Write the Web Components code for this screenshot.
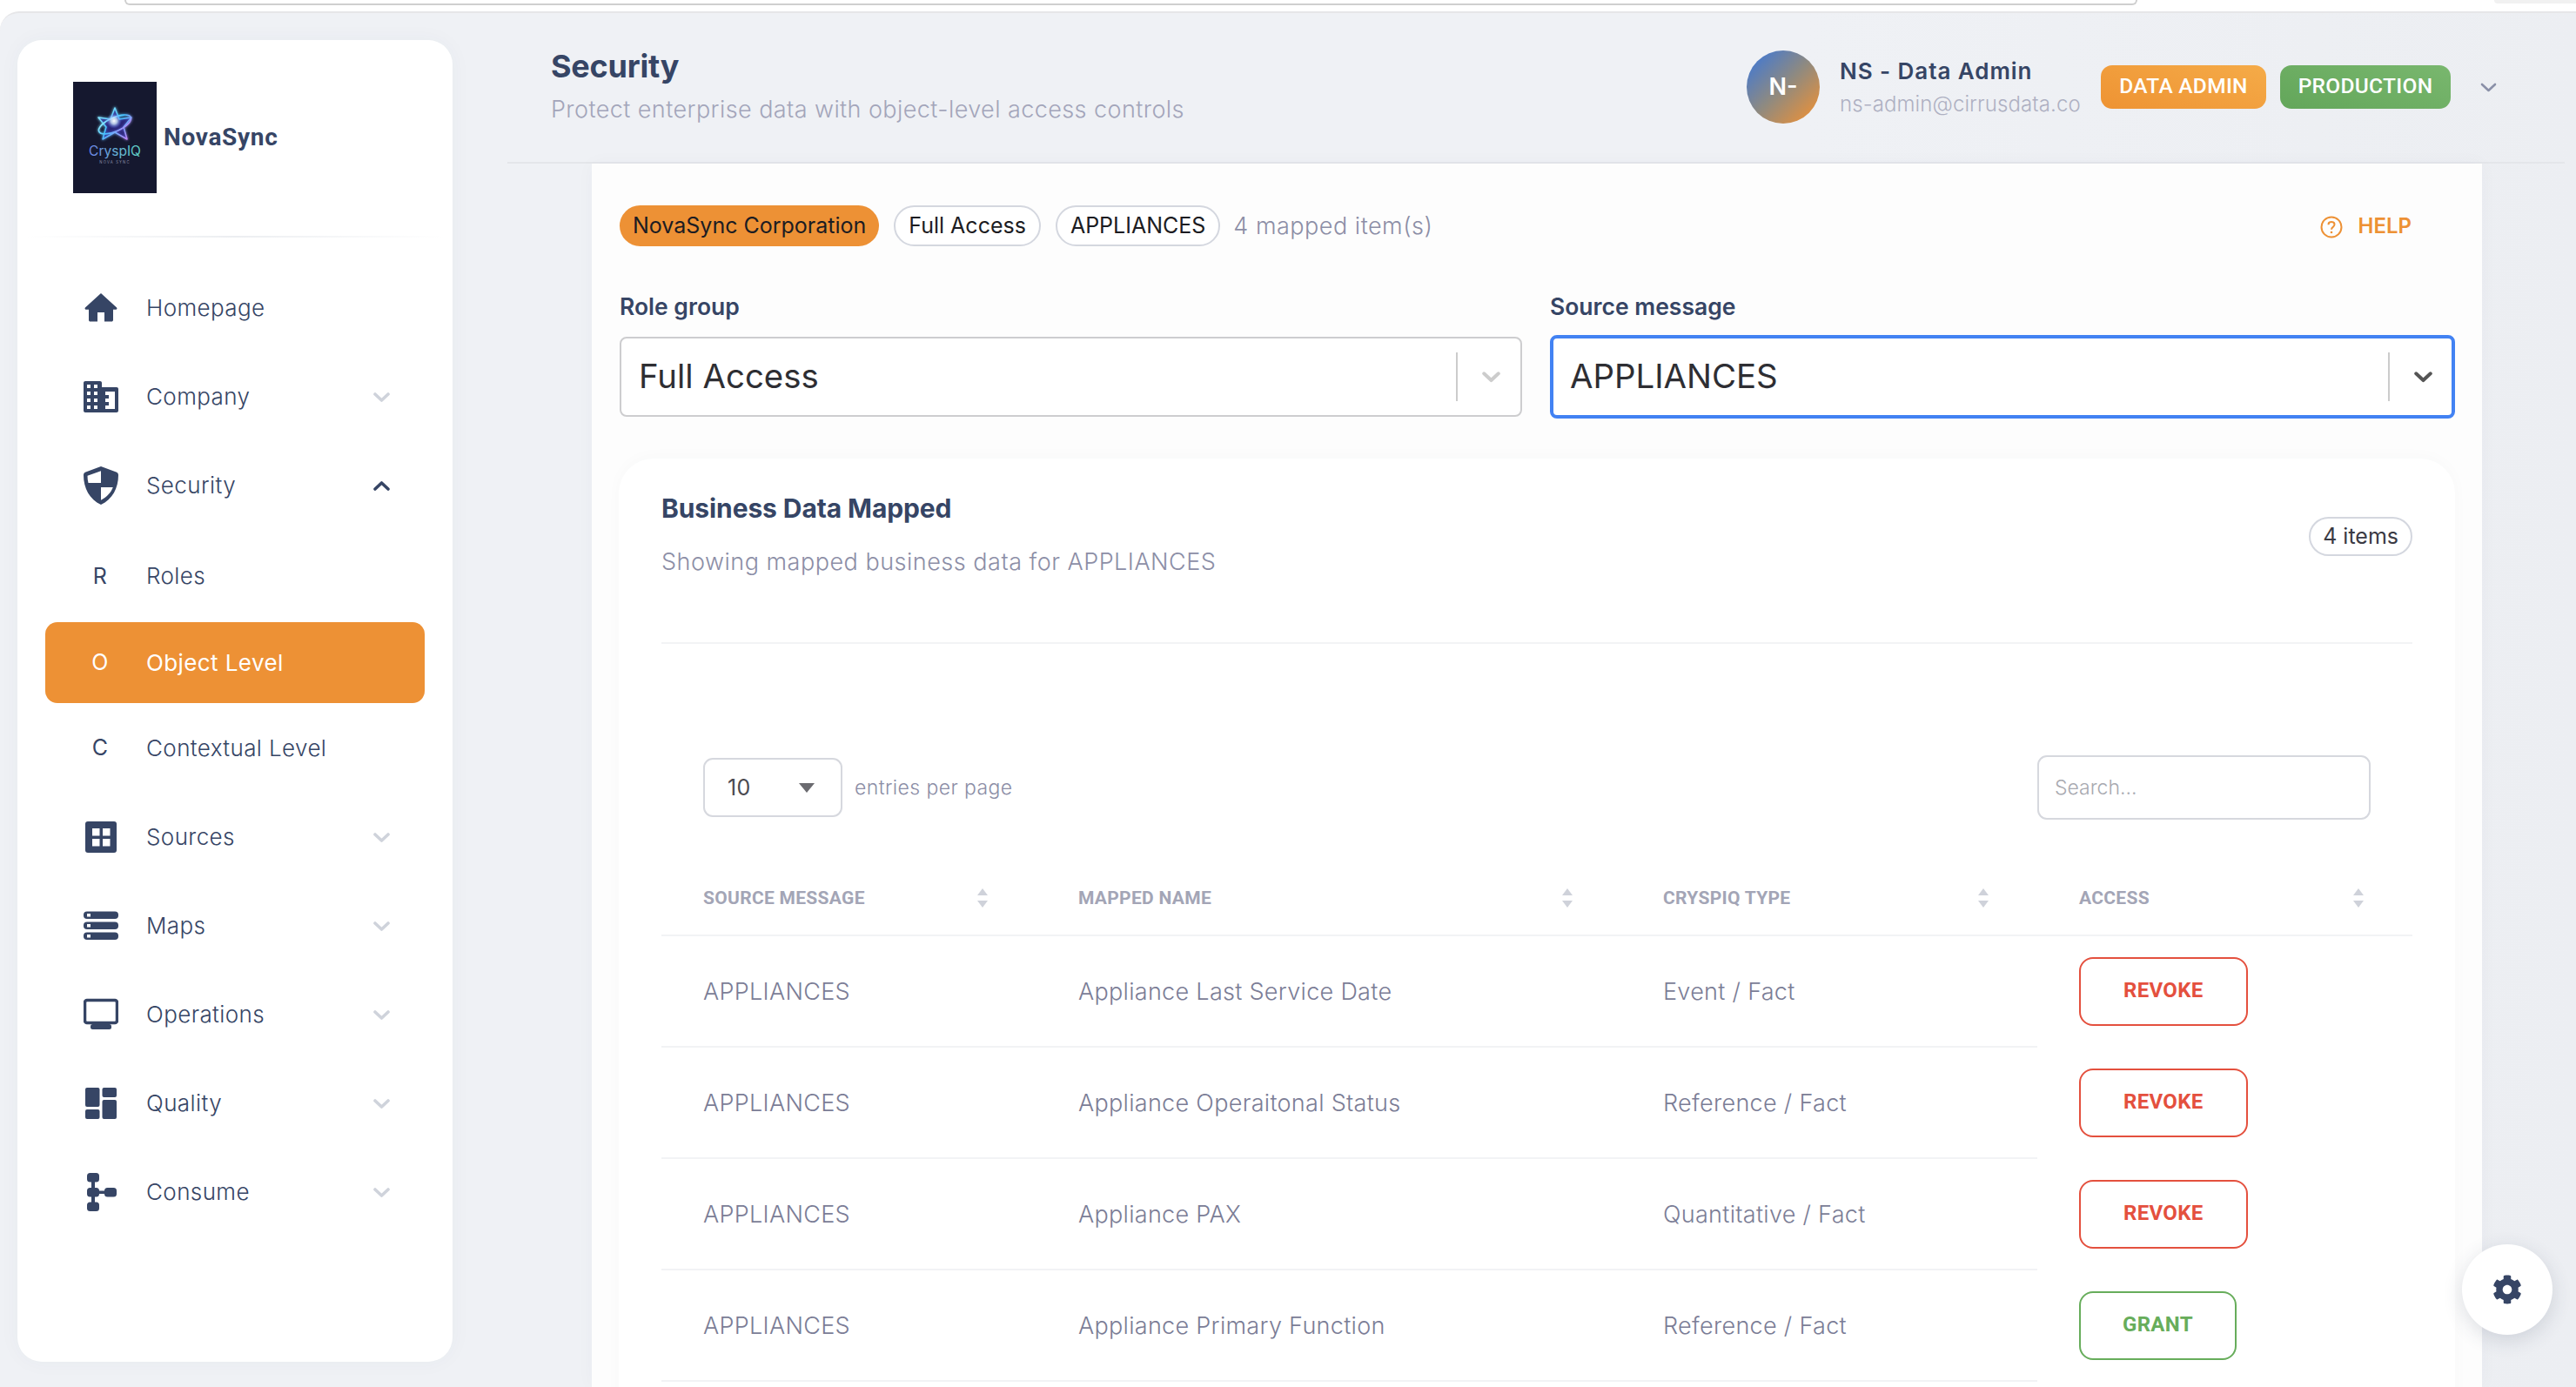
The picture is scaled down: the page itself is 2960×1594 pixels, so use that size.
<!DOCTYPE html>
<html lang="en">
<head>
<meta charset="utf-8">
<title>Security</title>
<style>
  html, body { margin: 0; height: 100%; background: #fff; overflow: hidden; font-family: Inter, "Liberation Sans", sans-serif; }
</style>
</head>
<body>
<app-shell>
  <top-strip slot="strip"></top-strip>
  <side-nav slot="side">
    <brand-logo></brand-logo>
    <nav-item icon="home" label="Homepage"></nav-item>
    <nav-item icon="building" label="Company" chevron="down"></nav-item>
    <nav-item icon="shield" label="Security" chevron="up"></nav-item>
    <nav-item letter="R" label="Roles" h="106"></nav-item>
    <nav-item letter="O" label="Object Level" h="93" active></nav-item>
    <nav-item letter="C" label="Contextual Level" h="103"></nav-item>
    <nav-item icon="sources" label="Sources" chevron="down"></nav-item>
    <nav-item icon="maps" label="Maps" chevron="down"></nav-item>
    <nav-item icon="monitor" label="Operations" chevron="down"></nav-item>
    <nav-item icon="quality" label="Quality" chevron="down"></nav-item>
    <nav-item icon="consume" label="Consume" chevron="down"></nav-item>
  </side-nav>
  <page-header></page-header>
  <content-panel>
    <filter-bar></filter-bar>
    <data-card>
      <map-row source="APPLIANCES" name="Appliance Last Service Date" type="Event / Fact" access="REVOKE"></map-row>
      <map-row source="APPLIANCES" name="Appliance Operaitonal Status" type="Reference / Fact" access="REVOKE"></map-row>
      <map-row source="APPLIANCES" name="Appliance PAX" type="Quantitative / Fact" access="REVOKE"></map-row>
      <map-row source="APPLIANCES" name="Appliance Primary Function" type="Reference / Fact" access="GRANT"></map-row>
    </data-card>
  </content-panel>
  <settings-fab slot="fab"></settings-fab>
</app-shell>

<script>
const NAVY = '#364565';

const ICONS = {
  home: `<svg viewBox="0 0 40 40"><path fill="${NAVY}" d="M20 3 1.900 19.600c-.8.8-.3 2.100.8 2.100H6v12c0 1 .8 1.800 1.800 1.800H16V25h8v10.500h8.200c1 0 1.800-.8 1.800-1.800v-12h3.300c1.100 0 1.600-1.300.8-2.100L20 3z"/></svg>`,
  building: `<svg viewBox="0 0 40 40"><path fill="${NAVY}" d="M2 2h17c1.100 0 2 .9 2 2v5h17c1.100 0 2 .9 2 2v25c0 1.100-.9 2-2 2H2c-1.100 0-2-.9-2-2V4c0-1.100.9-2 2-2z"/>
    <g fill="#fff"><rect x="4" y="6" width="4" height="4"/><rect x="12" y="6" width="4" height="4"/><rect x="4" y="14" width="4" height="4"/><rect x="12" y="14" width="4" height="4"/><rect x="4" y="22" width="4" height="4"/><rect x="12" y="22" width="4" height="4"/><rect x="4" y="30" width="4" height="4"/><rect x="12" y="30" width="4" height="4"/><rect x="21" y="14" width="15" height="20"/></g>
    <g fill="${NAVY}"><rect x="21" y="9" width="4" height="29"/><rect x="25" y="18" width="4" height="4"/><rect x="25" y="26" width="4" height="4"/></g></svg>`,
  shield: `<svg viewBox="0 0 40 44"><path fill="${NAVY}" d="M20 0 2.500 6.500C1 7 0 8.400 0 10c0 15 7 28 20 34 13-6 20-19 20-34 0-1.600-1-3-2.500-3.500L20 0z"/>
    <path fill="#fff" d="M20 5.200 4.500 10.800c0 2.800.3 5.600 1 8.200H20V5.200zM20 24v14.800c7-3.700 11.800-9.200 13.800-14.800H20z"/></svg>`,
  sources: `<svg viewBox="0 0 40 40"><rect x="2" y="2" width="36" height="36" rx="3" fill="${NAVY}"/><g fill="#fff"><rect x="10" y="10" width="8.500" height="8.500"/><rect x="22" y="10" width="8.500" height="8.500"/><rect x="10" y="22" width="8.500" height="8.500"/><rect x="22" y="22" width="8.500" height="8.500"/></g></svg>`,
  maps: `<svg viewBox="0 0 40 40"><g fill="${NAVY}"><rect y="3.500" width="40" height="8.500" rx="4"/><rect y="15.500" width="40" height="8.500" rx="4"/><rect y="27.500" width="40" height="8.500" rx="4"/></g><g fill="#fff"><rect x="4" y="6" width="4" height="3.500"/><rect x="4" y="18" width="4" height="3.500"/><rect x="4" y="30" width="4" height="3.500"/></g></svg>`,
  monitor: `<svg viewBox="0 0 40 40"><rect x="1.500" y="3.500" width="37" height="26" rx="2.500" fill="none" stroke="${NAVY}" stroke-width="3.500"/><rect x="8" y="31" width="24" height="6" rx="2.500" fill="${NAVY}"/></svg>`,
  quality: `<svg viewBox="0 0 40 40"><g fill="${NAVY}"><rect x="2" y="2" width="16.500" height="22" rx="2"/><rect x="2" y="27" width="16.500" height="11" rx="2"/><rect x="21.500" y="2" width="16.500" height="11" rx="2"/><rect x="21.500" y="16" width="16.500" height="22" rx="2"/></g></svg>`,
  consume: `<svg viewBox="0 0 40 44"><g fill="${NAVY}"><rect x="4" y="0" width="14" height="10.500" rx="3.500"/><rect x="4" y="17" width="14" height="10.500" rx="3.500"/><rect x="4" y="33.500" width="14" height="10.500" rx="3.500"/><rect x="24" y="17" width="14" height="10.500" rx="3.500"/><rect x="9" y="6" width="4" height="32"/><rect x="14" y="20.500" width="14" height="3.500"/></g></svg>`
};

function chevron(dir, color, w, sw) {
  const d = dir === 'up' ? 'M2 10 9.500 3 17 10' : 'M2 3 9.500 10 17 3';
  return `<svg width="${w || 19}" viewBox="0 0 19 13" style="display:block"><path d="${d}" fill="none" stroke="${color}" stroke-width="${sw || 3.6}" stroke-linecap="round" stroke-linejoin="round"/></svg>`;
}

class AppShell extends HTMLElement {
  connectedCallback() {
    this.attachShadow({ mode: 'open' });
    this.shadowRoot.innerHTML = `
      <style>
        :host { display: flex; flex-direction: column; height: 100vh; overflow: hidden; position: relative; color: ${NAVY}; }
        .page {
          flex: 1; min-height: 0;
          display: grid; grid-template-columns: 500px 1fr; column-gap: 63px;
          padding: 31px 13px 0 20px;
          background: linear-gradient(90deg, #eff1f5 0%, #eff1f5 70%, #eceef2 100%);
          border-top: 2px solid #e6e6e8;
          border-radius: 22px 0 0 0;
        }
        .side { padding-bottom: 29px; min-height: 0; display: flex; }
        .main { margin-top: -31px; display: flex; flex-direction: column; min-height: 0; }
      </style>
      <slot name="strip"></slot>
      <div class="page">
        <div class="side"><slot name="side"></slot></div>
        <div class="main"><slot></slot></div>
      </div>
      <slot name="fab"></slot>`;
  }
}

class TopStrip extends HTMLElement {
  connectedCallback() {
    this.attachShadow({ mode: 'open' });
    this.shadowRoot.innerHTML = `
      <style>
        :host { display: flex; height: 13px; background: #fff; }
        .bar { margin-left: 143px; width: 2309px; height: 4px; border: 2px solid #cfcfcf; border-top: 0; border-radius: 0 0 16px 16px; }
        .tab { margin-left: 410px; flex: 1; height: 4px; background: #f1f1f1; border-radius: 0 0 0 10px; }
      </style>
      <div class="bar"></div><div class="tab"></div>`;
  }
}

class SideNav extends HTMLElement {
  connectedCallback() {
    this.attachShadow({ mode: 'open' });
    this.shadowRoot.innerHTML = `
      <style>
        :host { display: flex; flex-direction: column; width: 500px; background: #fff; border-radius: 28px; box-shadow: 0 0 24px rgba(60,70,100,.04); }
      </style>
      <slot></slot>`;
  }
}

class BrandLogo extends HTMLElement {
  connectedCallback() {
    this.attachShadow({ mode: 'open' });
    this.shadowRoot.innerHTML = `
      <style>
        :host { display: block; padding: 48px 0 0 64px; margin-bottom: 30px; position: relative; }
        .row { display: flex; align-items: center; gap: 8px; padding-bottom: 49px; }
        svg { display: block; }
        .name { font: 700 28px/1 Roboto, sans-serif; letter-spacing: .7px; color: ${NAVY}; }
        .rule { height: 2px; margin-left: -54px; margin-right: 10px; background: linear-gradient(90deg, transparent, #eceef1 50%, transparent); }
      </style>
      <div class="row">
        <svg width="96" height="128" viewBox="0 0 96 128">
          <defs>
            <linearGradient id="g1" x1="0" x2="1" y1="0" y2="1"><stop offset="0" stop-color="#9df3ff"/><stop offset=".5" stop-color="#45c0ff"/><stop offset="1" stop-color="#d07cf5"/></linearGradient>
            <linearGradient id="g2" x1="0" x2="1"><stop offset="0" stop-color="#6f86ea"/><stop offset="1" stop-color="#5fd6c4"/></linearGradient>
            <radialGradient id="g3"><stop offset="0" stop-color="#fff"/><stop offset=".4" stop-color="#d4ebff" stop-opacity=".8"/><stop offset="1" stop-color="#4f6dff" stop-opacity="0"/></radialGradient>
            <filter id="glow" x="-30%" y="-30%" width="160%" height="160%"><feGaussianBlur stdDeviation="1.800"/></filter>
          </defs>
          <rect width="96" height="128" fill="#15182f"/>
          <g fill="none" stroke="url(#g1)" stroke-width="2.200" stroke-linejoin="round" filter="url(#glow)" opacity=".8">
            <path d="M48 30 53 43 67 41 58 52 62 66 48 58 34 66 38 52 29 41 43 43Z"/>
            <ellipse cx="48" cy="49" rx="20" ry="8" transform="rotate(-24 48 49)"/>
          </g>
          <path d="M48 30 53 43 67 41 58 52 62 66 48 58 34 66 38 52 29 41 43 43Z" fill="#3b2fb0" fill-opacity=".55" stroke="url(#g1)" stroke-width="1.500" stroke-linejoin="round"/>
          <ellipse cx="48" cy="49" rx="20" ry="8" transform="rotate(-24 48 49)" fill="none" stroke="url(#g1)" stroke-width="1.600"/>
          <circle cx="47" cy="45" r="9" fill="url(#g3)"/>
          <text x="48" y="85" text-anchor="middle" font-family="Inter, sans-serif" font-size="15.500" fill="url(#g2)">CryspIQ</text>
          <text x="48" y="94" text-anchor="middle" font-family="Inter, sans-serif" font-size="4.200" letter-spacing="1.200" fill="#8a8fa8">NOVA SYNC</text>
        </svg>
        <span class="name">NovaSync</span>
      </div>
      <div class="rule"></div>`;
  }
}

class NavItem extends HTMLElement {
  connectedCallback() {
    this.attachShadow({ mode: 'open' });
    const active = this.hasAttribute('active');
    const h = this.getAttribute('h') || 102;
    const letter = this.getAttribute('letter');
    const icon = this.getAttribute('icon');
    const dir = this.getAttribute('chevron');
    const lead = letter ? `<span class="letter">${letter}</span>` : ICONS[icon];
    const chev = dir ? chevron(dir, dir === 'up' ? NAVY : '#cfd3db') : '';
    this.shadowRoot.innerHTML = `
      <style>
        :host { display: block; margin: 0 32px; }
        .item {
          height: ${h}px; box-sizing: border-box; display: flex; align-items: center;
          padding: 0 40px 0 44px; border-radius: 14px;
          font: 300 26px/1 Inter, sans-serif; letter-spacing: .4px; color: ${active ? '#fff' : NAVY};
          ${active ? 'background: #ed9135; font-weight: 400;' : ''}
        }
        .lead { width: 40px; margin-right: 32px; display: flex; justify-content: center; }
        .lead svg { width: 40px; display: block; }
        .letter { font: 400 25px/1 Inter, sans-serif; margin-left: -2px; }
        .label { flex: 1; }
      </style>
      <div class="item"><span class="lead">${lead}</span><span class="label">${this.getAttribute('label')}</span>${chev}</div>`;
  }
}

class PageHeader extends HTMLElement {
  connectedCallback() {
    this.attachShadow({ mode: 'open' });
    this.shadowRoot.innerHTML = `
      <style>
        :host { display: flex; align-items: center; height: 173px; box-sizing: border-box; padding: 0 0 0 50px; border-bottom: 2px solid #e4e6ea; flex: none; }
        .title { flex: 1; margin-top: -5px; }
        h1 { margin: 0; font: 700 36px/46px Inter, sans-serif; letter-spacing: -.2px; color: ${NAVY}; }
        p { margin: 10px 0 0; font: 300 27px/34px Inter, sans-serif; letter-spacing: .42px; color: #a3a5ba; }
      </style>
      <div class="title"><h1>Security</h1><p>Protect enterprise data with object-level access controls</p></div>
      <user-menu></user-menu>`;
  }
}

class UserMenu extends HTMLElement {
  connectedCallback() {
    this.attachShadow({ mode: 'open' });
    this.shadowRoot.innerHTML = `
      <style>
        :host { display: flex; align-items: center; margin-right: 131px; margin-top: -2px; position: relative; }
        .avatar { width: 84px; height: 84px; border-radius: 50%; display: flex; align-items: center; justify-content: center;
          background: linear-gradient(135deg, #3f78d6 5%, #8f8a80 50%, #ee9135 95%); color: #fff; font: 600 27px/1 Inter, sans-serif; }
        .who { margin: 0 25px 0 23px; width: 275px; white-space: nowrap; }
        .name { font: 600 26px/36px Inter, sans-serif; letter-spacing: .95px; color: ${NAVY}; }
        .mail { font: 300 24px/32px Inter, sans-serif; letter-spacing: .1px; color: #aeb0c2; margin-top: 4px; }
        .tag { height: 50px; box-sizing: border-box; display: flex; align-items: center; justify-content: center; border-radius: 13px; color: #fff; font: 500 24.500px/1 Roboto, sans-serif; letter-spacing: .3px; }
        .admin { width: 190px; background: linear-gradient(20deg, #ee9333, #f5ab48); margin-right: 16px; }
        .prod { width: 196px; background: linear-gradient(20deg, #63a65a, #79b76e); }
        .more { position: absolute; right: -53px; top: 36px; }
      </style>
      <div class="avatar">N-</div>
      <div class="who"><div class="name">NS - Data Admin</div><div class="mail">ns-admin@cirrusdata.co</div></div>
      <div class="tag admin">DATA ADMIN</div>
      <div class="tag prod">PRODUCTION</div>
      <span class="more">${chevron('down', '#8a90a8', 19, 2.6)}</span>`;
  }
}

class ContentPanel extends HTMLElement {
  connectedCallback() {
    this.attachShadow({ mode: 'open' });
    this.shadowRoot.innerHTML = `
      <style>
        :host { display: block; flex: 1; min-height: 0; margin: 0 95px 0 97px; padding: 48px 31px 0; background: #fdfdfd; box-shadow: 0 0 20px rgba(60,70,100,.03); }
      </style>
      <slot></slot>`;
  }
}

class PillChip extends HTMLElement {
  connectedCallback() {
    this.attachShadow({ mode: 'open' });
    const on = this.hasAttribute('accent');
    this.shadowRoot.innerHTML = `
      <style>
        :host { display: inline-flex; height: 47px; box-sizing: border-box; align-items: center; padding: 0 15px; border-radius: 24px;
          font: 400 25px/1 Inter, sans-serif; color: #1c1c22;
          ${on ? 'background: #ed9135;' : 'background: #fff; border: 2px solid #d4d7df;'} }
      </style>
      <slot></slot>`;
  }
}

class FieldSelect extends HTMLElement {
  connectedCallback() {
    this.attachShadow({ mode: 'open' });
    const focus = this.hasAttribute('focus');
    this.shadowRoot.innerHTML = `
      <style>
        :host { display: block; }
        label { display: block; font: 600 26.500px/34px Inter, sans-serif; color: ${NAVY}; margin-bottom: 18px; }
        .box { height: ${focus ? 96 : 92}px; box-sizing: border-box; display: flex; align-items: center; background: #fff; border-radius: 8px;
          border: ${focus ? '4px solid #4282f3' : '2px solid #cdcdcf'}; ${focus ? 'margin-top: -2px;' : ''} padding: 0 ${focus ? 19 : 20}px; font: 400 38.400px/1 Inter, sans-serif; color: #2e2e33; }
        .val { flex: 1; margin-top: -2px; }
        .sep { width: 2px; height: 56px; background: #cccccc; margin-right: 28px; }
        svg { margin-right: 3px; }
      </style>
      <label>${this.getAttribute('label')}</label>
      <div class="box"><span class="val">${this.getAttribute('value')}</span><span class="sep"></span>${chevron('down', focus ? '#555' : '#cccccc', 21)}</div>`;
  }
}

class FilterBar extends HTMLElement {
  connectedCallback() {
    this.attachShadow({ mode: 'open' });
    this.shadowRoot.innerHTML = `
      <style>
        :host { display: block; padding-left: 1px; margin-bottom: 46px; }
        .chips { display: flex; align-items: center; gap: 17px; height: 47px; margin-bottom: 52px; }
        .count { font: 300 27px/1 Inter, sans-serif; letter-spacing: .5px; color: #8c8ea6; margin-left: -2px; flex: 1; }
        .help { display: flex; align-items: center; gap: 18px; margin-right: 50px; color: #ed9135; font: 600 24px/1 Inter, sans-serif; }
        .help svg { display: block; margin-top: 3px; }
        .fields { display: grid; grid-template-columns: 1037px 1040px; column-gap: 32px; }
      </style>
      <div class="chips">
        <pill-chip accent>NovaSync Corporation</pill-chip>
        <pill-chip>Full Access</pill-chip>
        <pill-chip>APPLIANCES</pill-chip>
        <span class="count">4 mapped item(s)</span>
        <span class="help"><svg width="26" height="26" viewBox="0 0 26 26"><circle cx="13" cy="13" r="11.500" fill="none" stroke="#ed9135" stroke-width="2"/><path d="M9.500 10.200c0-2 1.500-3.300 3.500-3.300s3.500 1.300 3.500 3.200c0 2.900-3.500 2.700-3.500 5.700" fill="none" stroke="#ed9135" stroke-width="2"/><circle cx="13" cy="19" r="1.300" fill="#ed9135"/></svg>HELP</span>
      </div>
      <div class="fields">
        <field-select label="Role group" value="Full Access"></field-select>
        <field-select label="Source message" value="APPLIANCES" focus></field-select>
      </div>`;
  }
}

class DataCard extends HTMLElement {
  connectedCallback() {
    this.attachShadow({ mode: 'open' });
    const sort = `<svg width="14" height="24" viewBox="0 0 14 24"><path d="M7 1 13 9H1Z" fill="#cfd2da"/><path d="M7 23 1 15H13Z" fill="#cfd2da"/></svg>`;
    const th = t => `<div class="th"><span>${t}</span>${sort}</div>`;
    this.shadowRoot.innerHTML = `
      <style>
        :host { display: block; background: #fff; border-radius: 40px 40px 0 0; padding: 37px 49px 80px; box-shadow: 0 -2px 18px rgba(60,70,100,.025); }
        .head { display: flex; justify-content: space-between; align-items: flex-start; height: 135px; padding-bottom: 39px; border-bottom: 2px solid #f2f3f5; margin-bottom: 128px; }
        h2 { margin: 0; font: 700 30px/40px Inter, sans-serif; letter-spacing: -.1px; color: ${NAVY}; }
        p { margin: 25px 0 0; font: 300 27px/34px Inter, sans-serif; letter-spacing: .5px; color: #8c8ea6; }
        .count { margin-top: 30px; height: 45px; box-sizing: border-box; padding: 0 14px; border: 2px solid #d4d7df; border-radius: 23px; display: flex; align-items: center; font: 400 25px/1 Inter, sans-serif; color: #3a3a44; }
        .tools { display: flex; align-items: center; justify-content: space-between; padding: 0 48px; height: 74px; margin-bottom: 48px; }
        .len { display: flex; align-items: center; gap: 14px; font: 300 23px/1 Inter, sans-serif; letter-spacing: .4px; color: #8c8ea6; }
        .pick { width: 160px; height: 68px; box-sizing: border-box; padding: 0 26px; border: 2px solid #d6d8de; border-radius: 11px; display: flex; align-items: center; justify-content: space-between; font: 400 25px/1 Inter, sans-serif; color: #4a4a50; }
        .pick i { width: 0; height: 0; border: 9px solid transparent; border-top: 11px solid #6b6b70; border-bottom: 0; margin-right: 4px; }
        .search { width: 383px; height: 74px; box-sizing: border-box; padding: 0 18px; border: 2px solid #d6d8de; border-radius: 11px; display: flex; align-items: center; font: 300 23px/1 Inter, sans-serif; color: #a8a9b0; }
        .cols { display: grid; grid-template-columns: 431px 672px 478px 431px; height: 84px; border-bottom: 2px solid #f2f3f5; }
        .th { display: flex; align-items: center; justify-content: space-between; padding: 0 55px 0 48px; font: 700 21px/1 Roboto, sans-serif; letter-spacing: .3px; color: #a3a5b6; }
        .th svg { display: block; }
      </style>
      <div class="head">
        <div><h2>Business Data Mapped</h2><p>Showing mapped business data for APPLIANCES</p></div>
        <span class="count">4 items</span>
      </div>
      <div class="tools">
        <div class="len"><span class="pick">10<i></i></span>entries per page</div>
        <div class="search">Search...</div>
      </div>
      <div class="cols">${th('SOURCE MESSAGE')}${th('MAPPED NAME')}${th('CRYSPIQ TYPE')}${th('ACCESS')}</div>
      <slot></slot>`;
  }
}

class MapRow extends HTMLElement {
  connectedCallback() {
    this.attachShadow({ mode: 'open' });
    const access = this.getAttribute('access');
    const color = access === 'GRANT' ? '#67ad5b' : '#e4503e';
    this.shadowRoot.innerHTML = `
      <style>
        :host { display: grid; grid-template-columns: 431px 672px 478px 431px; height: 128px; }
        .td { display: flex; align-items: center; padding-left: 48px; box-sizing: border-box; border-bottom: 2px solid #f2f3f5; font: 300 27px/1 Inter, sans-serif; letter-spacing: .3px; color: #7b7d96; }
        .td.act { border-bottom: 0; }
        .btn { height: 79px; box-sizing: border-box; padding: 0 ${access === 'GRANT' ? 48 : 49}px 3px; border: 2px solid ${color}; border-radius: 16px; display: flex; align-items: center; font: 700 24px/1 Roboto, sans-serif; letter-spacing: .3px; color: ${color}; margin-top: -1px; }
      </style>
      <div class="td">${this.getAttribute('source')}</div>
      <div class="td">${this.getAttribute('name')}</div>
      <div class="td">${this.getAttribute('type')}</div>
      <div class="td act"><span class="btn">${access}</span></div>`;
  }
}

class SettingsFab extends HTMLElement {
  connectedCallback() {
    this.attachShadow({ mode: 'open' });
    this.shadowRoot.innerHTML = `
      <style>
        :host { position: absolute; left: 2829px; top: 1430px; width: 104px; height: 104px; border-radius: 50%; background: #fff; box-shadow: 0 6px 22px rgba(50,60,90,.16); display: flex; align-items: center; justify-content: center; }
        svg { display: block; }
      </style>
      <svg width="34" height="34" viewBox="0 0 512 512"><path fill="${NAVY}" d="M487.4 315.7l-42.6-24.6c4.3-23.2 4.3-47 0-70.2l42.6-24.6c4.9-2.8 7.1-8.6 5.5-14-11.1-35.6-30-67.8-54.7-94.6-3.8-4.1-10-5.1-14.8-2.3L380.8 110c-17.9-15.4-38.5-27.3-60.8-35.1V25.8c0-5.6-3.9-10.5-9.4-11.7-36.7-8.2-74.3-7.8-109.2 0-5.5 1.2-9.4 6.1-9.4 11.7V75c-22.2 7.9-42.8 19.8-60.8 35.1L88.7 85.5c-4.9-2.8-11-1.9-14.8 2.3-24.7 26.7-43.6 58.9-54.7 94.6-1.7 5.4.6 11.2 5.5 14L67.3 221c-4.3 23.2-4.3 47 0 70.2l-42.6 24.6c-4.9 2.8-7.1 8.6-5.5 14 11.1 35.6 30 67.8 54.7 94.6 3.8 4.1 10 5.1 14.8 2.3l42.6-24.6c17.9 15.4 38.5 27.3 60.8 35.1v49.2c0 5.6 3.9 10.5 9.4 11.7 36.7 8.2 74.3 7.8 109.2 0 5.5-1.2 9.4-6.1 9.4-11.7v-49.2c22.2-7.9 42.8-19.8 60.8-35.1l42.6 24.6c4.9 2.8 11 1.9 14.8-2.3 24.7-26.7 43.6-58.9 54.7-94.6 1.5-5.5-.7-11.3-5.6-14.1zM256 336c-44.1 0-80-35.9-80-80s35.9-80 80-80 80 35.9 80 80-35.9 80-80 80z"/></svg>`;
  }
}

customElements.define('app-shell', AppShell);
customElements.define('top-strip', TopStrip);
customElements.define('side-nav', SideNav);
customElements.define('brand-logo', BrandLogo);
customElements.define('nav-item', NavItem);
customElements.define('page-header', PageHeader);
customElements.define('user-menu', UserMenu);
customElements.define('content-panel', ContentPanel);
customElements.define('pill-chip', PillChip);
customElements.define('field-select', FieldSelect);
customElements.define('filter-bar', FilterBar);
customElements.define('data-card', DataCard);
customElements.define('map-row', MapRow);
customElements.define('settings-fab', SettingsFab);
</script>
</body>
</html>
